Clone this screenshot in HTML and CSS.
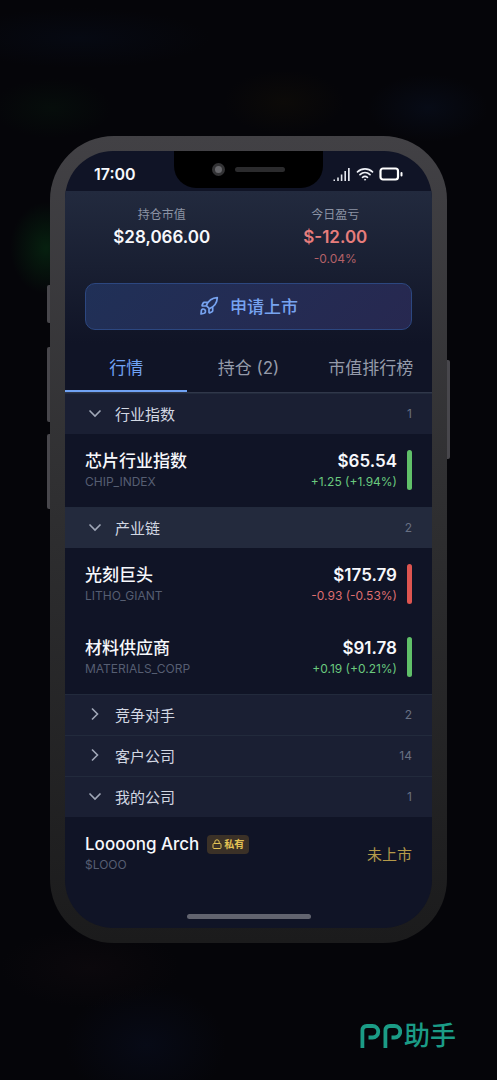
FILE: index.html
```html
<!DOCTYPE html>
<html lang="zh-CN">
<head>
<meta charset="utf-8">
<meta name="viewport" content="width=device-width, initial-scale=1">
<title>行情</title>
<link rel="stylesheet" href="styles.css">
</head>
<body>
<svg class="sprite" aria-hidden="true">
  <symbol id="down" viewBox="0 0 20 20"><path d="M4.500 7.500L10 13l5.500-5.500"/></symbol>
  <symbol id="right" viewBox="0 0 20 20"><path d="M7 4.500l5.500 5.500L7 15.500"/></symbol>
</svg>
<main class="stage">
  <div class="phone">
    <span class="key key-mute"></span>
    <span class="key key-up"></span>
    <span class="key key-down"></span>
    <span class="key key-power"></span>
    <div class="screen">
      <header class="status">
        <time class="clock">17:00</time>
        <div class="notch"><span class="camera"></span><span class="speaker"></span></div>
        <div class="signals">
          <svg width="18" height="14" viewBox="0 0 18 14" fill="#e4e6ee"><path d="M.5 12.500H2V14H.5zM4.200 10.500h1.600V14H4.200zM7.800 7.500h1.600V14H7.800zM11.400 4H13v10h-1.600zM15 1h1.700v13H15z"/></svg>
          <svg width="18" height="14" viewBox="0 0 18 14" fill="none" stroke="#eef0f6" stroke-width="1.700" stroke-linecap="round"><path d="M1.500 4.800c4.300-4 10.700-4 15 0M4 7.700c3-2.700 7-2.700 10 0M6.500 10.300c1.500-1.200 3.500-1.200 5 0"/><circle cx="9" cy="12.700" r=".6" fill="#eef0f6" stroke-width=".6"/></svg>
          <svg width="24" height="14" viewBox="0 0 24 14" fill="none" stroke="#fff" stroke-width="2.200"><rect x="1.500" y="1.500" width="17.500" height="11" rx="2.500"/><path d="M22.500 6v2.500" stroke-width="2" stroke-linecap="round"/></svg>
        </div>
      </header>
      <section class="summary">
        <dl class="figures">
          <div class="figure"><dt>持仓市值</dt><dd class="amount">$28,066.00</dd></div>
          <div class="figure figure-loss"><dt>今日盈亏</dt><dd class="amount">$-12.00</dd><dd class="rate">-0.04%</dd></div>
        </dl>
        <button class="apply" type="button">
          <svg width="20" height="20" viewBox="0 0 20 20" fill="none" stroke="currentColor" stroke-width="1.700" stroke-linecap="round" stroke-linejoin="round"><path d="M7.300 9.600C9 5.600 12.500 2 18.300 1.700 18 7.500 14.400 11 10.400 12.700zM8.800 6.300H5.200Q4.500 6.300 4.200 7L3.200 9q-.4 1 .6 1h3.500M13.700 11.200v3.600q0 .7-.7 1l-2 1q-1 .4-1-.6v-3.500M2 18l.4-3.600q.2-1 1.200-1.300c1.600-.5 3.300 1.200 2.800 2.800q-.3 1-1.300 1.300z"/></svg>
          <span>申请上市</span>
        </button>
      </section>
      <nav class="tabs">
        <button class="tab tab-active" type="button">行情</button>
        <button class="tab" type="button">持仓 (2)</button>
        <button class="tab" type="button">市值排行榜</button>
      </nav>
      <div class="list">
        <button class="group" type="button"><svg class="arrow"><use href="#down"/></svg><span class="title">行业指数</span><span class="count">1</span></button>
        <article class="stock">
          <div class="company"><h3>芯片行业指数</h3><p>CHIP_INDEX</p></div>
          <div class="quote up"><strong>$65.54</strong><span>+1.25 (+1.94%)</span></div>
          <i class="bar bar-up"></i>
        </article>
        <button class="group group-bright" type="button"><svg class="arrow"><use href="#down"/></svg><span class="title">产业链</span><span class="count">2</span></button>
        <article class="stock">
          <div class="company"><h3>光刻巨头</h3><p>LITHO_GIANT</p></div>
          <div class="quote down"><strong>$175.79</strong><span>-0.93 (-0.53%)</span></div>
          <i class="bar bar-down"></i>
        </article>
        <article class="stock">
          <div class="company"><h3>材料供应商</h3><p>MATERIALS_CORP</p></div>
          <div class="quote up"><strong>$91.78</strong><span>+0.19 (+0.21%)</span></div>
          <i class="bar bar-up"></i>
        </article>
        <button class="group" type="button"><svg class="arrow"><use href="#right"/></svg><span class="title">竞争对手</span><span class="count">2</span></button>
        <button class="group" type="button"><svg class="arrow"><use href="#right"/></svg><span class="title">客户公司</span><span class="count">14</span></button>
        <button class="group" type="button"><svg class="arrow"><use href="#down"/></svg><span class="title">我的公司</span><span class="count">1</span></button>
        <article class="stock">
          <div class="company">
            <h3>Loooong Arch
              <span class="badge"><svg width="10" height="10" viewBox="0 0 10 10" fill="none" stroke="currentColor"><rect x="1" y="4.500" width="8" height="5" rx="1"/><path d="M2.800 4.500V3a2.200 2.200 0 0 1 4.400 0v1.500"/></svg>私有</span>
            </h3>
            <p>$LOOO</p>
          </div>
          <span class="unlisted">未上市</span>
        </article>
      </div>
      <div class="home"></div>
    </div>
  </div>
  <footer class="brand">
    <svg width="42" height="26" viewBox="0 0 42 26" fill="none" stroke="currentColor" stroke-width="3.800" aria-hidden="true"><path d="M2.400 25V7.500q0-4.500 4.500-4.500h5.600a5 5 0 0 1 0 11.500H8.500M25.400 25V7.500q0-4.500 4.500-4.500h4.600a5 5 0 0 1 0 11.500H31.500"/></svg>
    <span>助手</span>
  </footer>
</main>
</body>
</html>
```

FILE: styles.css
```css
* { box-sizing: border-box; }

body {
  margin: 0;
  background: #050509;
  color: #f7f8fc;
  font-family: Inter, "Noto Sans CJK SC", sans-serif;
}

h3, p, dl, dd { margin: 0; }

button {
  border: 0;
  padding: 0;
  background: none;
  color: inherit;
  font: inherit;
}

.sprite { position: absolute; width: 0; height: 0; }

.stage {
  min-height: 100vh;
  padding: 136px 50px 26px;
  background:
    radial-gradient(ellipse 60px 30px at 52px 108px, #060d0b, transparent),
    radial-gradient(ellipse 60px 32px at 284px 102px, #0c0a08, transparent),
    radial-gradient(ellipse 60px 34px at 428px 108px, #070b16, transparent),
    radial-gradient(ellipse 130px 30px at 80px 38px, #060912, transparent),
    radial-gradient(ellipse 36px 46px at 46px 248px, #06200f, transparent),
    radial-gradient(ellipse 90px 40px at 90px 968px, #0b080c, transparent),
    radial-gradient(ellipse 80px 60px at 146px 1045px, #070a16, transparent),
    #050509;
}

.phone {
  position: relative;
  padding: 15px;
  border-radius: 64px;
  background: linear-gradient(#424145, #2f2f31 45%, #1b1b1c);
}

.key {
  position: absolute;
  width: 3px;
  left: -3px;
  background: #48474c;
  border-radius: 2px 0 0 2px;
}
.key-mute { top: 149px; height: 38px; }
.key-up { top: 211px; height: 75px; }
.key-down { top: 298px; height: 75px; }
.key-power { top: 224px; height: 99px; left: auto; right: -3px; border-radius: 0 2px 2px 0; }

.screen {
  overflow: hidden;
  border-radius: 48px;
  background: #101426;
}

.status {
  display: grid;
  grid-template-columns: 1fr 149px 1fr;
  height: 40px;
}
.clock {
  align-self: center;
  padding: 5px 0 0 29px;
  font-size: 16px;
  font-weight: 600;
}
.notch {
  display: flex;
  align-items: center;
  justify-content: center;
  gap: 10px;
  height: 37px;
  padding-right: 1px;
  border-radius: 0 0 22px 22px;
  background: #000;
}
.camera {
  width: 13px;
  height: 13px;
  border: 3px solid #333335;
  border-radius: 50%;
  background: #67676b;
}
.speaker { width: 50px; height: 5px; border-radius: 3px; background: #2b2b2d; }
.signals {
  display: flex;
  align-items: center;
  justify-content: flex-end;
  gap: 5px;
  padding: 5px 29px 0 0;
}

.summary {
  padding: 14px 20px 13px;
  background: linear-gradient(#222a3e, #101426);
}
.figures {
  display: grid;
  grid-template-columns: 1fr 1fr;
  gap: 20px;
  min-height: 78px;
  text-align: center;
}
.figure dt { color: #8c93a4; font-size: 12px; line-height: 20px; }
.amount { font-size: 17px; font-weight: 600; line-height: 24px; }
.rate { font-size: 12px; line-height: 20px; }
.figure-loss .amount { color: #e77d7c; }
.figure-loss .rate { color: #b46168; }

.apply {
  display: flex;
  align-items: center;
  justify-content: center;
  gap: 11px;
  width: 100%;
  height: 47px;
  padding-bottom: 2px;
  border: 1px solid #2c4780;
  border-radius: 10px;
  background: linear-gradient(135deg, #203057, #272850);
  color: #77a3f0;
  font-size: 17px;
  font-weight: 500;
}

.tabs {
  display: grid;
  grid-template-columns: repeat(3, 1fr);
  border-bottom: 1px solid #30374a;
}
.tab {
  height: 49px;
  border-bottom: 2px solid transparent;
  color: #959baa;
  font-size: 17px;
  white-space: nowrap;
}
.tab-active { border-color: #70a2f4; color: #70a2f4; }

.group {
  display: flex;
  align-items: center;
  gap: 10px;
  width: 100%;
  height: 41px;
  padding: 0 20px 2px;
  border-top: 1px solid #222a3c;
  background: #1a1f33;
  text-align: left;
}
.group-bright { background: #232a3d; }
.arrow {
  width: 20px;
  height: 20px;
  fill: none;
  stroke: #a1a8b8;
  stroke-width: 1.600;
}
.title { flex: 1; color: #d2d7e2; font-size: 15px; }
.count { color: #687083; font-size: 12px; }

.stock {
  display: flex;
  align-items: center;
  gap: 10px;
  height: 73px;
  padding: 0 20px 1px;
}
.company { flex: 1; }
.company h3 {
  display: flex;
  align-items: center;
  gap: 8px;
  font-size: 17px;
  font-weight: 500;
  line-height: 24px;
}
.company p { color: #565e72; font-size: 12px; line-height: 18px; }
.quote { display: flex; flex-direction: column; text-align: right; }
.quote strong { color: #f7f8fc; font-size: 17px; font-weight: 600; line-height: 24px; }
.quote span { font-size: 12px; line-height: 18px; }
.up { color: #6ac97e; }
.down { color: #de6e70; }
.bar { width: 5px; height: 40px; border-radius: 3px; }
.bar-up { background: #60c069; }
.bar-down { background: #de5550; }

.badge {
  display: flex;
  align-items: center;
  gap: 2px;
  padding: 0 5px;
  border-radius: 4px;
  background: #3b3127;
  color: #e4c354;
  font-size: 10px;
  font-weight: 700;
  line-height: 19px;
}
.unlisted { color: #b49a4a; font-size: 15px; }

.home {
  width: 124px;
  height: 5px;
  margin: 24px auto 9px;
  border-radius: 3px;
  background: #62646f;
}

.brand {
  display: flex;
  align-items: center;
  justify-content: flex-end;
  gap: 2px;
  margin: 75px -9px 0 0;
  color: #1b9c86;
  font-size: 26px;
  font-weight: 500;
  line-height: 36px;
}
```
